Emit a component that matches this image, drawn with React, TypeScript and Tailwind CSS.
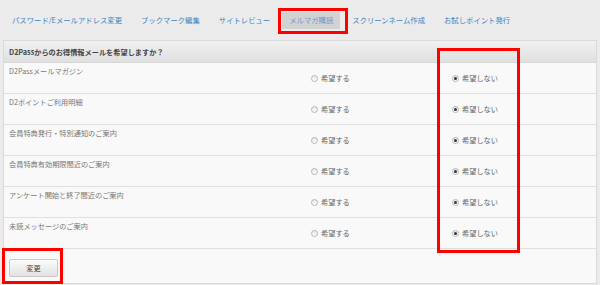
const tabs = [
  "パスワード/Eメールアドレス変更",
  "ブックマーク編集",
  "サイトレビュー",
  "メルマガ購読",
  "スクリーンネーム作成",
  "お試しポイント発行",
];

const items = [
  "D2Passメールマガジン",
  "D2ポイントご利用明細",
  "会員特典発行・特別通知のご案内",
  "会員特典有効期限間近のご案内",
  "アンケート開始と終了間近のご案内",
  "未読メッセージのご案内",
];

const Radio = ({ checked, label }: { checked: boolean; label: string }) => (
  <div className="flex items-center gap-[3px]">
    <span className="w-[7px] h-[7px] rounded-full border border-[#b5b5b5] bg-gradient-to-b from-[#e6e6e6] to-white flex items-center justify-center">
      {checked && <span className="w-[3px] h-[3px] rounded-full bg-[#333]" />}
    </span>
    <span className="text-[#666]">{label}</span>
  </div>
);

export default function App() {
  return (
    <div
      className="relative w-[600px] h-[285px] overflow-hidden bg-[#ebebeb] text-[7.2px] leading-[10px]"
      style={{ fontFamily: '"Noto Sans CJK JP", "Noto Sans", sans-serif' }}
    >
      {/* tabs */}
      <nav className="h-[40px] flex items-center pl-[5px] gap-[5px] text-[7.35px]">
        {tabs.map((t, i) => (
          <div
            key={t}
            className={
              i === 3
                ? "px-[7px] h-[17px] flex items-center bg-[#d2d2d2] text-[#6a9bc9]"
                : "px-[7px] h-[17px] flex items-center text-[#3f86c2]"
            }
          >
            {t}
          </div>
        ))}
      </nav>

      {/* panel */}
      <div className="mx-[3px] h-[244px] border border-[#dadada] bg-[#f9f9f9]">
        <div className="h-[22px] flex items-center px-[5px] bg-gradient-to-b from-[#f0f0f0] to-[#e0e0e0] border-b border-[#d6d6d6] font-bold text-[#444]">
          D2Passからのお得情報メールを希望しますか？
        </div>
        {items.map((label) => (
          <div key={label} className="h-[31px] flex border-b border-[#e0e0e0]">
            <div className="w-[307px] pl-[5px] pt-[3px] text-[#777]">{label}</div>
            <div className="w-[141px] pt-[10px]">
              <Radio checked={false} label="希望する" />
            </div>
            <div className="pt-[10px]">
              <Radio checked label="希望しない" />
            </div>
          </div>
        ))}
        <div className="pl-[5px] pt-[10px]">
          <button className="w-[49px] h-[18px] rounded-[2px] border border-[#c8c8c8] bg-gradient-to-b from-[#fbfbfb] to-[#e2e2e2] text-[#444] text-[7.2px]">
            変更
          </button>
        </div>
      </div>

      {/* annotation boxes */}
      <div className="absolute left-[278px] top-[8px] w-[70px] h-[26px] border-[3px] border-[#ff0000]" />
      <div className="absolute left-[437px] top-[48px] w-[83px] h-[205px] border-[3px] border-[#ff0000]" />
      <div className="absolute left-[2px] top-[248px] w-[61px] h-[36px] border-[3px] border-[#ff0000]" />
    </div>
  );
}
